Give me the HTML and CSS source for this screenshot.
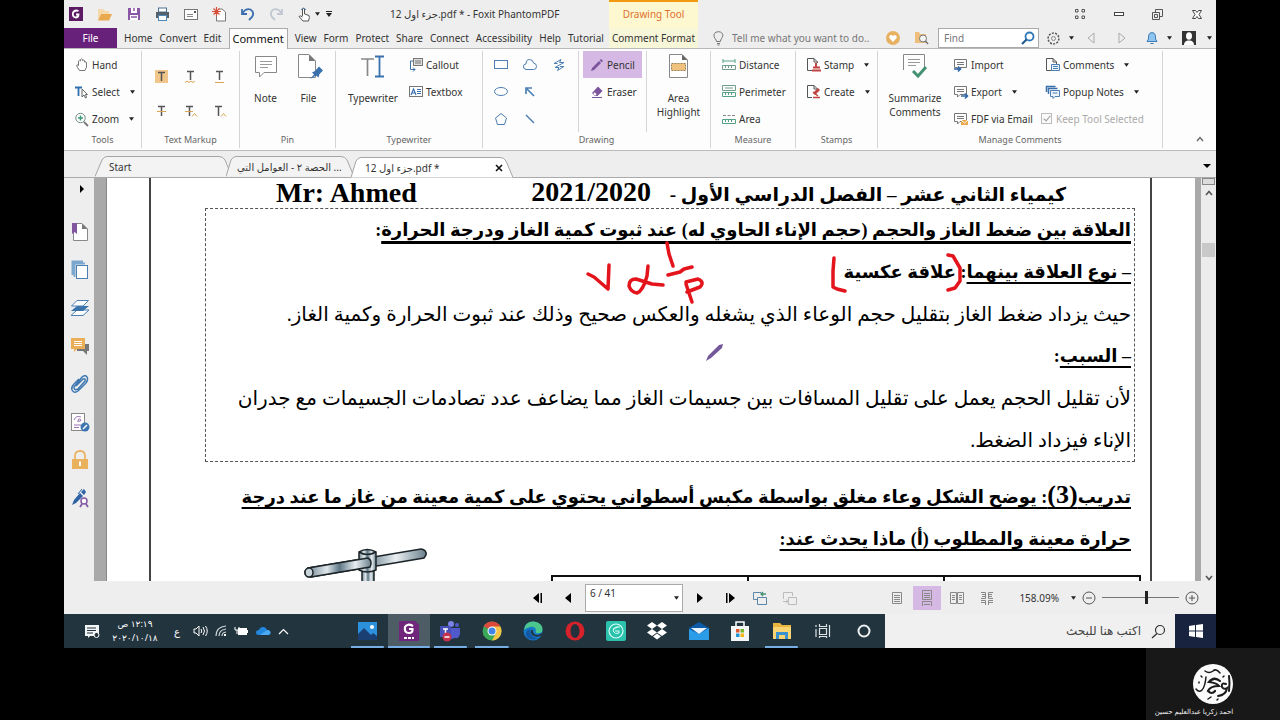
FILE: index.html
```html
<!DOCTYPE html>
<html lang="en">
<head>
<meta charset="utf-8">
<title>جزء اول 12.pdf * - Foxit PhantomPDF</title>
<link rel="stylesheet" href="styles.css">
</head>
<body>
<svg class="defs" aria-hidden="true">
  <symbol id="down" viewBox="0 0 6 4"><path d="M0 0H6L3 4Z" fill="#222"/></symbol>
  <symbol id="balloon" viewBox="0 0 16 16"><path d="M1.500 2.500H13.500V10.500H7L4.500 13V10.500H1.500ZM4 5.500H11M4 7.500H11" fill="none" stroke="#777"/></symbol>
  <symbol id="sheet" viewBox="0 0 16 16"><path d="M1.500 1.500H8L11.500 5V13.500H1.500ZM8 1.500V5H11.500" fill="none" stroke="#555"/></symbol>
</svg>
<div class="app">
  <header class="head">
    <div class="quick">
      <div class="quick-icons">
        <svg width="15" height="15" viewBox="0 0 15 15"><rect x="1" y="0" width="14" height="14" fill="#5d1b66"/><path d="M10.500 4Q7 2.500 5 5.500Q4 9.500 7.500 10.500Q10.500 10.500 10.500 7.500H8" fill="none" stroke="#fff" stroke-width="1.800"/></svg>
        <svg width="16" height="15" viewBox="0 0 16 15"><path d="M1 2H6L8 4H12V7H4L1 13Z" fill="#f6d9ab"/><path d="M4 7H15L12 13.500H1Z" fill="#e9a94e"/></svg>
        <svg width="14" height="14" viewBox="0 0 14 14"><path d="M1 1H13V13H1Z" fill="#8a56a6"/><rect x="4" y="1" width="6" height="5" fill="#fff"/><rect x="3" y="8" width="8" height="5" fill="#fff"/><path d="M7 1V4M4 10H10" stroke="#8a56a6" stroke-width="1.500"/></svg>
        <svg width="15" height="15" viewBox="0 0 15 15"><rect x="3.500" y="1" width="8" height="4" fill="#fff" stroke="#4c6f91"/><rect x="1" y="5" width="13" height="6" fill="#55606b"/><rect x="3.500" y="8.500" width="8" height="5" fill="#fff" stroke="#4c88bb"/></svg>
        <svg width="15" height="13" viewBox="0 0 15 13"><rect x=".5" y="1.500" width="13" height="10" fill="#fff" stroke="#777"/><path d="M3 6.500H9M3 8.500H9" stroke="#888"/><rect x="10" y="3" width="2" height="2" fill="#555"/></svg>
        <svg width="15" height="15" viewBox="0 0 15 15"><path d="M4.500 4V14H13.500V5L10 2H7" fill="#fff" stroke="#777"/><path d="M4.500 0V9M0 4.500H9M1.500 1.500L7.500 7.500M7.500 1.500L1.500 7.500" stroke="#d5513b" stroke-width="1.200"/></svg>
        <svg width="14" height="14" viewBox="0 0 14 14"><path d="M1 2V7H6M1.500 6Q5 1 9.500 2.500Q14 5.500 11 10L8 13" fill="none" stroke="#3a6fae" stroke-width="1.800"/></svg>
        <svg width="14" height="14" viewBox="0 0 14 14"><path d="M13 2V7H8M12.500 6Q9 1 4.500 2.500Q0 5.500 3 10L6 13" fill="none" stroke="#c1c8d2" stroke-width="1.800"/></svg>
        <svg width="14" height="15" viewBox="0 0 14 15"><path d="M5.500 9V2Q6.500 0 7.500 2V7L12 8.500Q13 10 11.500 14H6L2 9.500Q3 8 5.500 10" fill="#fff" stroke="#555"/><path d="M4 3Q6.500 -1 9 3" fill="none" stroke="#5b8ec0"/></svg>
      </div>
      <div class="quick-more">
        <svg width="5" height="4"><use href="#down"/></svg>
        <svg width="6" height="6" viewBox="0 0 6 6"><path d="M0 .5H6" stroke="#222"/><path d="M0 2H6L3 6Z" fill="#222"/></svg>
      </div>
      <h1 class="win-title"><bdi dir="ltr">12 <bdi>جزء اول</bdi>.pdf * - Foxit PhantomPDF</bdi></h1>
    </div>
    <div class="context">Drawing Tool</div>
    <div class="win-buttons">
      <button aria-label="Layout"><svg width="12" height="12" viewBox="0 0 12 12"><path d="M1.500 1.500H4V4H1.500ZM8 1.500H10.500V4H8ZM1.500 8H4V10.500H1.500ZM8 8H10.500V10.500H8Z" fill="none" stroke="#555"/></svg></button>
      <button aria-label="Minimize"><svg width="10" height="6" viewBox="0 0 10 6"><rect x=".5" y="1.500" width="9" height="3" fill="#fff" stroke="#444"/></svg></button>
      <button aria-label="Restore"><svg width="11" height="11" viewBox="0 0 11 11"><path d="M3.500 3V.5H10.500V7.500H8M.5 3.500H7.500V10.500H.5ZM2.500 5.500H5.500V8.500H2.500Z" fill="none" stroke="#555"/></svg></button>
      <button aria-label="Close"><svg width="10" height="9" viewBox="0 0 10 9"><path d="M.5 .5H3.500L5 2.500L6.500 .5H9.500L7 4.500L9.500 8.500H6.500L5 6.500L3.500 8.500H.5L3 4.500Z" fill="#fff" stroke="#444"/></svg></button>
    </div>
    <nav class="menu">
      <button class="file">File</button><button>Home</button><button>Convert</button><button>Edit</button><button class="on">Comment</button><button>View</button><button>Form</button><button>Protect</button><button>Share</button><button>Connect</button><button>Accessibility</button><button>Help</button><button>Tutorial</button>
    </nav>
    <button class="context-tab">Comment Format</button>
    <div class="helpers">
      <label class="tell"><svg width="11" height="15" viewBox="0 0 11 15"><path d="M3.500 10.500Q3.500 9 2 7.500Q-.5 3 3 1.200Q8 -.5 9.800 3.500Q10 6 8.500 7.500Q7.500 9 7.500 10.500ZM4 12.500H7M4.500 14H6.500" fill="none" stroke="#777"/></svg><input type="text" aria-label="Tell me" placeholder="Tell me what you want to do.."></label>
      <div class="fav">
        <svg width="14" height="14" viewBox="0 0 14 14"><circle cx="7" cy="7" r="7" fill="#e8b162"/><path d="M7 11L3.300 7Q3 4 5.200 4Q6.500 4 7 5.200Q7.500 4 9 4Q11 4.500 10.700 7Z" fill="#fff"/></svg>
        <svg width="15" height="14" viewBox="0 0 15 14"><path d="M1 1H5L6 3H12V12H1Z" fill="#eebf7c"/><circle cx="9" cy="7.500" r="3.500" fill="#f5f5f5" stroke="#777"/><path d="M11.500 10L14 13" stroke="#777" stroke-width="1.500"/></svg>
      </div>
      <label class="find"><input type="search" aria-label="Find" placeholder="Find"><svg width="14" height="14" viewBox="0 0 14 14"><circle cx="8.500" cy="5.500" r="4" fill="#fff" stroke="#2f78ba" stroke-width="1.800"/><path d="M5.500 8.500L1 13" stroke="#24598f" stroke-width="2.200"/></svg></label>
      <div class="tray">
        <svg width="13" height="13" viewBox="0 0 13 13"><circle cx="6.500" cy="6.500" r="5.400" fill="none" stroke="#555" stroke-width="1.500" stroke-dasharray="2 1.300"/><circle cx="6.500" cy="6.500" r="2" fill="none" stroke="#888"/></svg>
        <svg width="5" height="4"><use href="#down"/></svg>
        <svg width="8" height="12" viewBox="0 0 8 12"><path d="M7 1V11L1 6Z" fill="none" stroke="#aaa"/></svg>
        <svg width="8" height="12" viewBox="0 0 8 12"><path d="M1 1V11L7 6Z" fill="none" stroke="#aaa"/></svg>
        <svg width="12" height="14" viewBox="0 0 12 14"><path d="M1 10.500L2.500 8V5Q3 1.500 6 1.500Q9 1.500 9.500 5V8L11 10.500Z" fill="#8fc5f1" stroke="#3f7fb8"/><path d="M4.500 12.500H7.500" stroke="#3f7fb8"/></svg>
        <svg width="5" height="4"><use href="#down"/></svg>
        <svg width="14" height="14" viewBox="0 0 14 14"><rect width="14" height="14" fill="#333"/><ellipse cx="7" cy="5" rx="3" ry="3.800" fill="#fff"/><path d="M2 14Q2 10 6 9.500H8Q12 10 12 14Z" fill="#fff"/></svg>
        <svg width="5" height="4"><use href="#down"/></svg>
      </div>
    </div>
  </header>

  <section class="ribbon" aria-label="Comment tools">
    <div class="group">
      <div class="body">
        <div class="stack">
          <button><svg width="16" height="16" viewBox="0 0 16 16"><path d="M5 13L2.500 8.500Q2.500 7 4.500 8.500V4Q5.500 2.500 6.500 4V2.500Q7.500 1 8.500 2.500V3.500Q10 2 10.500 4V5Q12.500 4 12.500 6V10L11 13.500H6Z" fill="#fff" stroke="#777"/></svg>Hand</button>
          <button><svg width="16" height="16" viewBox="0 0 16 16"><path d="M1 3.500H8M4.500 3.500V12" stroke="#2f6faf" stroke-width="1.800"/><path d="M8 5V13L10 11L11.500 14L12.500 13.500L11.500 10.500H13.500Z" fill="#fff" stroke="#666"/></svg>Select<svg class="dd" width="5" height="4"><use href="#down"/></svg></button>
          <button><svg width="16" height="16" viewBox="0 0 16 16"><circle cx="6.500" cy="7" r="4.700" fill="#fff" stroke="#6f8a84"/><path d="M4 7H9M6.500 4.500V9.500" stroke="#3e9a77" stroke-width="1.500"/><path d="M10 11L14 15" stroke="#777" stroke-width="1.800"/></svg>Zoom<svg class="dd" width="5" height="4"><use href="#down"/></svg></button>
        </div>
      </div>
      <h2>Tools</h2>
    </div>
    <div class="group">
      <div class="body center">
        <div class="marks">
          <button aria-label="Highlight"><svg width="15" height="15" viewBox="0 0 15 15"><rect x="1" y="1" width="13" height="13" fill="#f0c68a"/><path d="M4 3.500H11M7.500 3V12" stroke="#555" stroke-width="1.500"/></svg></button>
          <button aria-label="Squiggly"><svg width="15" height="15" viewBox="0 0 15 15"><path d="M4 2.500H11M7.500 2V11" stroke="#555" stroke-width="1.500"/><path d="M2 13.500L4 12L6 13.500L8 12L10 13.500L12 12" fill="none" stroke="#dba552"/></svg></button>
          <button aria-label="Underline"><svg width="15" height="15" viewBox="0 0 15 15"><path d="M4 2.500H11M7.500 2V11" stroke="#555" stroke-width="1.500"/><path d="M3 13.500H12" stroke="#dba552"/></svg></button>
          <button aria-label="Strikeout"><svg width="15" height="15" viewBox="0 0 15 15"><path d="M4 3.500H11M7.500 3V13" stroke="#555" stroke-width="1.500"/><path d="M3 8.500H12" stroke="#dba552"/></svg></button>
          <button aria-label="Replace"><svg width="15" height="15" viewBox="0 0 15 15"><path d="M3 3.500H10M6.500 3V13" stroke="#555" stroke-width="1.500"/><path d="M2 8.500H10M9 13.500L11.500 10.500L14 13.500" fill="none" stroke="#dba552"/></svg></button>
          <button aria-label="Insert"><svg width="15" height="15" viewBox="0 0 15 15"><path d="M3 3.500H10M6.500 3V13" stroke="#555" stroke-width="1.500"/><path d="M9 13.500L11.500 10.500L14 13.500" fill="none" stroke="#dba552"/></svg></button>
        </div>
      </div>
      <h2>Text Markup</h2>
    </div>
    <div class="group">
      <div class="body center wide-gap">
        <button class="big"><svg width="26" height="28" viewBox="0 0 26 28"><path d="M2.500 4.500H23.500V20.500H11L6.500 25V20.500H2.500Z" fill="#fff" stroke="#888"/><path d="M7 9.500H19M7 12.500H19M7 15.500H15" stroke="#999"/></svg>Note</button>
        <button class="big"><svg width="28" height="28" viewBox="0 0 28 28"><path d="M3.500 2.500H14L20.500 9V25.500H3.500Z" fill="#fff" stroke="#888"/><path d="M14 2.500V9H20.500Z" fill="#777"/><path d="M15 27L19 22.500L17 20.500L20 19L24 14.500L28 18.500L24.500 22L23.500 25.500L21 23.500Z" fill="#3a70ac"/></svg>File</button>
      </div>
      <h2>Pin</h2>
    </div>
    <div class="group">
      <div class="body">
        <button class="big typewriter"><svg width="26" height="28" viewBox="0 0 26 28"><path d="M1 7H14M7.500 7V24" stroke="#888" stroke-width="1.700"/><path d="M15 4.500H24M15 24.500H24M19.500 4.500V24.500" stroke="#3a70ac" stroke-width="1.800"/></svg>Typewriter</button>
        <div class="stack">
          <button><svg width="16" height="16" viewBox="0 0 16 16"><rect x="5.500" y="1.500" width="9" height="7" fill="#ddd" stroke="#777"/><path d="M7 4H13M7 6H13" stroke="#777"/><path d="M5 4H2.500V12.500H7M5 10.500L7 12.500L5 14.500" fill="none" stroke="#3a70ac"/></svg>Callout</button>
          <button><svg width="16" height="16" viewBox="0 0 16 16"><rect x="1.500" y="2.500" width="13" height="10" fill="#fff" stroke="#777"/><path d="M3 11L5.500 5L8 11M4 9H7" fill="none" stroke="#3a70ac" stroke-width="1.200"/><path d="M9 5.500H13M9 7.500H13M9 9.500H13" stroke="#3a70ac"/></svg>Textbox</button>
        </div>
      </div>
      <h2>Typewriter</h2>
    </div>
    <div class="group">
      <div class="body">
        <div class="shapes">
          <button aria-label="Rectangle"><svg width="16" height="16" viewBox="0 0 16 16"><rect x="1.500" y="3.500" width="13" height="8"/></svg></button>
          <button aria-label="Cloud"><svg width="16" height="16" viewBox="0 0 16 16"><path d="M4 12.500Q1 12 1.500 9Q1.500 7 4 7Q4 2.500 7.500 2.500Q11 2.500 11.500 6Q14.500 6.500 14.500 9.500Q14.500 12.500 11.500 12.500Z"/></svg></button>
          <button aria-label="Polyline"><svg width="16" height="16" viewBox="0 0 16 16"><path d="M3 6.500L10 2.500L8.500 5.500H13L4 10.500H8L6.500 13.500L13 9.500H9M3 6.500H6.500"/></svg></button>
          <button aria-label="Oval"><svg width="16" height="16" viewBox="0 0 16 16"><ellipse cx="8" cy="7.500" rx="6.500" ry="4"/></svg></button>
          <button aria-label="Arrow"><svg width="16" height="16" viewBox="0 0 16 16"><path d="M12 12L4 4M4 10V4H10" stroke-width="1.700"/></svg></button><span></span>
          <button aria-label="Polygon"><svg width="16" height="16" viewBox="0 0 16 16"><path d="M8 2.500L13.500 7L11.500 13.500H4.500L2.500 7Z"/></svg></button>
          <button aria-label="Line"><svg width="16" height="16" viewBox="0 0 16 16"><path d="M4 4L12 12" stroke-width="1.500"/></svg></button>
        </div>
        <div class="stack pens">
          <button class="active"><svg width="16" height="16" viewBox="0 0 16 16"><path d="M2 14L3 11L10 4L12 6L5 13ZM10.700 3.300L12 2L14 4L12.700 5.300Z" fill="#7b549c"/></svg>Pencil</button>
          <button><svg width="16" height="16" viewBox="0 0 16 16"><path d="M3 9L9 2.500L13.500 7L8.500 12H6Z" fill="#7b549c"/><path d="M5 9L7 11" stroke="#fff" stroke-width="2"/><path d="M3 13.500H13" stroke="#7b549c"/></svg>Eraser</button>
        </div>
        <button class="big area"><svg width="22" height="28" viewBox="0 0 22 28"><path d="M1.500 2.500H14L19.500 8V25.500H1.500Z" fill="#fff" stroke="#888"/><path d="M14 2.500V8H19.500Z" fill="#666"/><rect x="3.500" y="11.500" width="14" height="7" fill="#f0c27e" stroke="#9b7e50" stroke-dasharray="2 1"/></svg>Area<br>Highlight</button>
      </div>
      <h2>Drawing</h2>
    </div>
    <div class="group">
      <div class="body">
        <div class="stack">
          <button><svg width="16" height="16" viewBox="0 0 16 16"><path d="M2 2V6M14 2V6M2 4H14" stroke="#55a184"/><path d="M1.500 8.500H14.500V12.500H1.500ZM4.500 9V11M7.500 9V11M10.500 9V11" fill="none" stroke="#6f9c8c"/></svg>Distance</button>
          <button><svg width="16" height="16" viewBox="0 0 16 16"><path d="M1.500 1.500H14.500V6.500H1.500ZM4 4H12" fill="none" stroke="#6f9c8c"/><path d="M1.500 8.500H14.500V12.500H1.500ZM4.500 9V11M7.500 9V11M10.500 9V11" fill="none" stroke="#55a184"/></svg>Perimeter</button>
          <button><svg width="16" height="16" viewBox="0 0 16 16"><path d="M2 4.500H14" stroke="#888" stroke-dasharray="3 1.500"/><path d="M1.500 8.500H14.500V12.500H1.500ZM4.500 9V11M7.500 9V11M10.500 9V11" fill="none" stroke="#55a184"/></svg>Area</button>
        </div>
      </div>
      <h2>Measure</h2>
    </div>
    <div class="group">
      <div class="body">
        <div class="stack">
          <button><svg width="16" height="16" viewBox="0 0 16 16"><use href="#sheet" width="16" height="16"/><rect x="6" y="6" width="8" height="9" fill="#fff"/><path d="M10 6V10M7 10.500H14M6 13.500H15" stroke="#bf4340" stroke-width="2"/></svg>Stamp<svg class="dd" width="5" height="4"><use href="#down"/></svg></button>
          <button><svg width="16" height="16" viewBox="0 0 16 16"><use href="#sheet" width="16" height="16"/><rect x="6" y="6" width="8" height="9" fill="#fff"/><path d="M8 10L13 5" stroke="#bf4340" stroke-width="3"/><path d="M7 8L12 12M7 13.500H14" stroke="#bf4340" stroke-width="1.500"/></svg>Create<svg class="dd" width="5" height="4"><use href="#down"/></svg></button>
        </div>
      </div>
      <h2>Stamps</h2>
    </div>
    <div class="group">
      <div class="body">
        <button class="big summary"><svg width="28" height="28" viewBox="0 0 28 28"><path d="M2.500 18V2.500H23.500V15" fill="none" stroke="#888"/><path d="M7 7.500H19M7 10.500H19M7 13.500H15" stroke="#999"/><path d="M12 19L17 24L25 15" fill="none" stroke="#459273" stroke-width="3"/></svg>Summarize<br>Comments</button>
        <div class="stack manage">
          <button><svg width="16" height="16" viewBox="0 0 16 16"><use href="#balloon" width="16" height="16"/><path d="M1 12H7M5 9.500L7.500 12L5 14.500" fill="none" stroke="#2f67a8" stroke-width="1.600"/></svg>Import</button>
          <button><svg width="16" height="16" viewBox="0 0 16 16"><use href="#balloon" width="16" height="16"/><path d="M8 12H14M12 9.500L14.500 12L12 14.500" fill="none" stroke="#2f67a8" stroke-width="1.600"/></svg>Export<svg class="dd" width="5" height="4"><use href="#down"/></svg></button>
          <button><svg width="16" height="16" viewBox="0 0 16 16"><use href="#balloon" width="16" height="16"/><rect x="8" y="9" width="7" height="5" fill="#e8a94c"/><path d="M8 9L11.500 12L15 9" fill="none" stroke="#fff"/></svg>FDF via Email</button>
        </div>
        <div class="stack">
          <button><svg width="16" height="16" viewBox="0 0 16 16"><use href="#sheet" width="16" height="16"/><path d="M6.500 7.500H14.500V13.500H6.500ZM8 9.500H13M8 11.500H13" fill="#eaf2fa" stroke="#4c7fb4"/></svg>Comments<svg class="dd" width="5" height="4"><use href="#down"/></svg></button>
          <button><svg width="16" height="16" viewBox="0 0 16 16"><path d="M1.500 8V2.500H10.500M3.500 10V4.500H12.500" fill="none" stroke="#3a70ac" stroke-width="1.500"/><path d="M5.500 6.500H14.500V12.500H10L8 14.500V12.500H5.500ZM7.500 9H12.500" fill="#eef4fb" stroke="#4c7fb4"/></svg>Popup Notes<svg class="dd" width="5" height="4"><use href="#down"/></svg></button>
          <label class="keep"><input type="checkbox" checked disabled>Keep Tool Selected</label>
        </div>
      </div>
      <h2>Manage Comments</h2>
    </div>
    <button class="collapse" aria-label="Collapse ribbon"><svg width="8" height="6" viewBox="0 0 8 6"><path d="M1 5L4 1.500L7 5" fill="none" stroke="#666" stroke-width="1.400"/></svg></button>
  </section>

  <nav class="tabs">
    <button class="tab start"><svg viewBox="0 0 137 21" preserveAspectRatio="none"><path d="M0 20.500L7 4Q9 .5 12 .5H124Q128 .5 130 4L137 20.500"/></svg><span>Start</span></button>
    <button class="tab second"><svg viewBox="0 0 128 21" preserveAspectRatio="none"><path d="M0 20.500L5 4Q7 .5 10 .5H115Q119 .5 121 4L128 20.500"/></svg><span dir="rtl">... الحصة ٢ - العوامل التي</span></button>
    <button class="tab current"><svg viewBox="0 0 162 21" preserveAspectRatio="none"><path d="M0 20.500L5 4Q7 .5 10 .5H149Q153 .5 155 4L162 20.500"/></svg><span>12 <bdi>جزء اول</bdi>.pdf *</span><svg class="x" width="8" height="8" viewBox="0 0 8 8"><path d="M1 1L7 7M7 1L1 7" stroke="#111" stroke-width="1.600"/></svg></button>
    <svg class="tabs-more" width="8" height="4" viewBox="0 0 8 4"><path d="M0 0H8L4 4Z"/></svg>
  </nav>

  <main class="work">
    <aside class="side">
      <button aria-label="Expand"><svg width="6" height="10" viewBox="0 0 6 10"><path d="M1 1L5 5L1 9Z"/></svg></button>
      <button aria-label="Bookmarks"><svg width="20" height="20" viewBox="0 0 20 20"><path d="M3.500 1.500H12L17.500 7V18.500H3.500Z" fill="#fff" stroke="#888"/><path d="M12 1.500V7H17.500Z" fill="#777"/><path d="M2 1H7V12L4.500 10L2 12Z" fill="#81559f"/></svg></button>
      <button aria-label="Pages"><svg width="20" height="20" viewBox="0 0 20 20"><path d="M2.500 15V1.500H13M4.500 17V3.500H15" fill="none" stroke="#7ba7cf" stroke-width="2"/><rect x="6.500" y="5.500" width="11" height="13" fill="#fff" stroke="#4c7fb4"/></svg></button>
      <button aria-label="Layers"><svg width="20" height="20" viewBox="0 0 20 20"><path d="M1 17.500L7 12H19L13 17.500Z" fill="#fff" stroke="#4c7fb4"/><path d="M1 13L7 8H19L13 13Z" fill="#3a73aa"/><path d="M1.500 8L7 2.500H18.500L13 8Z" fill="#fff" stroke="#4c7fb4"/></svg></button>
      <button aria-label="Comments"><svg width="20" height="20" viewBox="0 0 20 20"><path d="M7 8H19V15H17V19L13 15H7Z" fill="#777"/><path d="M1 2H15V13H7L4 16V13H1Z" fill="#ebae58"/><path d="M4 5.500H12M4 7.500H12M4 9.500H12" stroke="#fff"/></svg></button>
      <button aria-label="Attachments"><svg width="20" height="20" viewBox="0 0 20 20"><path d="M6 12L13 5Q16 4 15 7L8 15Q4 17 4 13L12 3Q16 0 17.500 4Q18 7 16 9L8 17Q4 20 2 16Q1 13 4 10L9 5" fill="none" stroke="#3f78b0" stroke-width="1.500"/></svg></button>
      <button aria-label="Signatures"><svg width="20" height="20" viewBox="0 0 20 20"><rect x="1.500" y="1.500" width="13" height="17" fill="#fff" stroke="#888"/><path d="M4 8Q6 3 11 5M8 10Q8 5 11 8Q11 10 8 9M4 13H11M4 15.500H9" fill="none" stroke="#9a75b4"/><circle cx="15" cy="15" r="4.500" fill="#3c76b1"/><path d="M13 17L17 13" stroke="#fff" stroke-width="1.400"/></svg></button>
      <button aria-label="Security"><svg width="20" height="20" viewBox="0 0 20 20"><path d="M5 10V6Q5 1 10 1Q15 1 15 6V10" fill="none" stroke="#e8b468" stroke-width="1.800"/><rect x="2" y="9" width="16" height="10" fill="#ebb25e"/><path d="M10 11.500V16" stroke="#fff" stroke-width="2"/></svg></button>
      <button aria-label="Digital signatures"><svg width="20" height="20" viewBox="0 0 20 20"><path d="M2 17L4 12L10 5L13 8L6 15ZM11 4L14 1L16 4L14 7Z" fill="#2d62a5"/><path d="M8 6L12 1" stroke="#2d62a5"/><circle cx="14" cy="13" r="3" fill="#fff" stroke="#845aa2" stroke-width="1.500"/><path d="M12 16L10 19M16 16L18 19" stroke="#845aa2" stroke-width="1.800"/></svg></button>
    </aside>
    <div class="splitter"></div>
    <article class="page" lang="ar" dir="rtl">
      <div class="frame">
        <header class="doc-head"><span>كيمياء الثاني عشر – الفصل الدراسي الأول - <b class="latin">&nbsp;&nbsp;2021/2020</b></span><b class="latin" dir="ltr">Mr: Ahmed</b></header>
        <section class="box">
          <p class="strong"><u class="thick">العلاقة بين ضغط الغاز والحجم (حجم الإناء الحاوي له) عند ثبوت كمية الغاز ودرجة الحرارة</u>:</p>
          <p class="strong"><u>– نوع العلاقة بينهما</u>: علاقة عكسية</p>
          <p>حيث يزداد ضغط الغاز بتقليل حجم الوعاء الذي يشغله والعكس صحيح وذلك عند ثبوت الحرارة وكمية الغاز.</p>
          <p class="strong"><u>– السبب</u>:</p>
          <p>لأن تقليل الحجم يعمل على تقليل المسافات بين جسيمات الغاز مما يضاعف عدد تصادمات الجسيمات مع جدران</p>
          <p>الإناء فيزداد الضغط.</p>
        </section>
        <section class="task">
          <p><u>تدريب<span class="number">(3)</span>: يوضح الشكل وعاء مغلق بواسطة مكبس أسطواني يحتوي على كمية معينة من غاز ما عند درجة</u></p>
          <p><u>حرارة معينة والمطلوب (أ) ماذا يحدث عند:</u></p>
        </section>
        <table class="grid"><tr><td></td><td></td><td></td></tr></table>
      </div>
      <svg class="ink" viewBox="107 177 1088 404" aria-hidden="true">
        <defs><linearGradient id="rod" x1="0" x2="1"><stop offset="0" stop-color="#748994"/><stop offset=".3" stop-color="#dfe7eb"/><stop offset=".5" stop-color="#5f7785"/><stop offset=".75" stop-color="#e9eff2"/><stop offset="1" stop-color="#6b818d"/></linearGradient></defs>
        <g fill="url(#rod)" stroke="#1d2529" stroke-width="1.500"><rect x="362" y="566" width="12" height="20"/><path d="M308 567L421 548Q427 549 426 554L424 557L311 576Q304 576 305 570Z"/><path d="M359 551V569Q367 573 376 569V551Q367 546 359 551ZM359 551Q367 556 376 551"/><path d="M308 567L368 557Q373 560 370 566L311 576Z"/><ellipse cx="309" cy="571.500" rx="4" ry="4.500" fill="#c9d5da"/></g>
        <g fill="none" stroke="#e3141b" stroke-width="3.500" stroke-linecap="round" stroke-linejoin="round">
          <path d="M588 273L594 276L608 288L609 264"/>
          <path d="M648 265L647 275Q643 290 637 292Q631 291 629 285Q629 278 636 278L652 283L663 284"/>
          <path d="M667 242L669 253L673 265M668 274L680 271L684 268L692 266"/>
          <path d="M686 283L689 292L692 301M686 281L698 278Q705 281 700 286L687 291"/>
          <path d="M834 257L833 270V286L837 288L845 290"/>
          <path d="M948 254L953 255L960 267V280L955 287L948 289"/>
        </g>
        <path d="M706 360L708 355L719 344L723 343L722 347L711 357Z" fill="#75589a"/>
      </svg>
    </article>
    <div class="scroll"><i class="split"></i><svg width="8" height="6" viewBox="0 0 8 6"><path d="M1 5L4 1.500L7 5" fill="none" stroke="#555" stroke-width="1.600"/></svg><i class="thumb"></i><svg width="8" height="6" viewBox="0 0 8 6"><path d="M1 1L4 4.500L7 1" fill="none" stroke="#555" stroke-width="1.600"/></svg></div>
  </main>

  <footer class="status">
    <div class="pager">
      <button aria-label="First page"><svg width="10" height="10" viewBox="0 0 10 10"><path d="M6 0V10L0 5ZM7.500 0H9V10H7.500Z"/></svg></button>
      <button aria-label="Previous page"><svg width="6" height="10" viewBox="0 0 6 10"><path d="M6 0V10L0 5Z"/></svg></button>
      <div class="page-pick"><select aria-label="Page"><option>6 / 41</option></select><svg width="5" height="4"><use href="#down"/></svg></div>
      <button aria-label="Next page"><svg width="6" height="10" viewBox="0 0 6 10"><path d="M0 0V10L6 5Z"/></svg></button>
      <button aria-label="Last page"><svg width="10" height="10" viewBox="0 0 10 10"><path d="M4 0V10L10 5ZM1 0H2.500V10H1Z"/></svg></button>
      <button aria-label="Previous view"><svg width="14" height="14" viewBox="0 0 14 14"><path d="M4 8.500H.5V1.500H8M4.500 6.500H13.500V13.500H4.500Z" fill="none" stroke="#5c87a9"/><path d="M13 3H8M10 1L8 3L10 5" fill="none" stroke="#459273" stroke-width="1.300"/></svg></button>
      <button aria-label="Next view"><svg width="14" height="14" viewBox="0 0 14 14"><path d="M.5 8V1.500H9.500V5M5.500 6.500H13.500V13.500H5.500ZM0 10.500H5M3 8.500L5 10.500L3 12.500" fill="none" stroke="#bbb"/></svg></button>
    </div>
    <div class="views">
      <button aria-label="Single page"><svg width="12" height="14" viewBox="0 0 12 14"><path d="M1.500 1.500H10.500V12.500H1.500ZM3 4.500H9M3 6.500H9M3 8.500H9M3 10.500H9"/></svg></button>
      <button class="sel" aria-label="Continuous"><svg width="12" height="16" viewBox="0 0 12 16"><path d="M1.500 .5H10.500V9.500H1.500ZM3 3.500H9M3 5.500H9M3 7.500H9M1.500 16V11.500H10.500V16M3 14.500H9"/></svg></button>
      <button aria-label="Facing"><svg width="14" height="12" viewBox="0 0 14 12"><path d="M.5 .5H6.500V11.500H.5ZM7.500 .5H13.500V11.500H7.500ZM2 3.500H5M2 5.500H5M2 7.500H5M9 3.500H12M9 5.500H12M9 7.500H12"/></svg></button>
      <button aria-label="Continuous facing"><svg width="14" height="14" viewBox="0 0 14 14"><path d="M1 1.500H5.500V7.500H1M13 1.500H8.500V7.500H13M2 3.500H5M2 5.500H5M9 3.500H12M9 5.500H12M1 9.500H5.500V14M13 9.500H8.500V14M1 11.500H5M9 11.500H13"/></svg></button>
    </div>
    <div class="zoom">
      <span>158.09%</span><svg width="5" height="4"><use href="#down"/></svg>
      <button aria-label="Zoom out"><svg width="14" height="14" viewBox="0 0 14 14"><circle cx="7" cy="7" r="6" fill="none" stroke="#555"/><path d="M4 7H10" stroke="#555"/></svg></button>
      <input type="range" aria-label="Zoom" min="0" max="100" value="58">
      <button aria-label="Zoom in"><svg width="14" height="14" viewBox="0 0 14 14"><circle cx="7" cy="7" r="6" fill="none" stroke="#555"/><path d="M4 7H10M7 4V10" stroke="#555"/></svg></button>
    </div>
  </footer>

  <div class="taskbar">
    <div class="systray">
      <svg width="16" height="15" viewBox="0 0 16 15"><path d="M1 1H15V12H6L4 14V12H1Z" fill="#f2f5f6"/><path d="M3 4H12M3 6.500H12M3 9H9" stroke="#22313b"/><circle cx="12.500" cy="11" r="2.500" fill="#22313b" stroke="#fff"/></svg>
      <time dir="rtl">١٢:١٩ ص<br>٢٠٢٠/١٠/١٨</time>
      <span class="lang">ع</span>
      <svg width="15" height="14" viewBox="0 0 15 14"><path d="M1 5H3L6 2V12L3 9H1ZM8 5Q9.500 7 8 9M10 3Q13 7 10 11M12.500 2Q16 7 12.500 12" fill="none" stroke="#fff"/></svg>
      <svg width="12" height="12" viewBox="0 0 12 12"><path d="M1 11Q1 2 11 1M4 11Q4 5 11 4M7 11Q7 7.500 11 7" fill="none" stroke="#cdd4d8" stroke-width="1.200"/><path d="M9 9H11V11H9Z" fill="#fff"/></svg>
      <svg width="15" height="10" viewBox="0 0 15 10"><rect x="4.500" y="2.500" width="8" height="6" fill="#fff" stroke="#fff"/><path d="M13.500 4V7M1 1V4H5V1M3 4V8" stroke="#fff" fill="none"/></svg>
      <svg width="15" height="10" viewBox="0 0 15 10"><path d="M3 9Q0 9 0 6.500Q0 4 3 4Q4 1 7 1Q10 1 11 4Q14.500 4 14.500 7Q14 9 12 9Z" fill="#2187df"/><path d="M4 9L11 4Q14.500 4 14.500 7Q14 9 12 9Z" fill="#4ca9f3"/></svg>
      <svg width="11" height="7" viewBox="0 0 11 7"><path d="M1 6L5.500 1.500L10 6" fill="none" stroke="#fff" stroke-width="1.200"/></svg>
    </div>
    <div class="apps">
      <button class="run" aria-label="Photos"><svg width="20" height="20" viewBox="0 0 20 20"><rect y="1" width="19" height="18" fill="#2c90dc"/><path d="M0 19V13L6 7L13 14L15 12L19 15V19Z" fill="#193f73"/><circle cx="14" cy="6" r="2" fill="#fff"/></svg></button>
      <button class="run focus" aria-label="Foxit"><svg width="20" height="20" viewBox="0 0 20 20"><path d="M0 0H16L20 4V20H0Z" fill="#70267a"/><path d="M14 5Q8 2 6 6Q5 12 10 12Q14 12 13.500 8H10" fill="none" stroke="#fff" stroke-width="2.200"/><path d="M5 17H15" stroke="#fff" stroke-width="2" stroke-dasharray="3 1"/></svg></button>
      <button class="run" aria-label="Teams"><svg width="22" height="22" viewBox="0 0 22 22"><circle cx="12" cy="4" r="3" fill="#7b83eb"/><circle cx="18" cy="5" r="2" fill="#5059c9"/><path d="M7 8H21V14Q20 19 16 18L9 20Z" fill="#5059c9"/><rect x="1" y="6" width="11" height="11" fill="#4650b8"/><path d="M4 9H9M6.500 9V14" stroke="#fff" stroke-width="1.500"/><circle cx="8" cy="17" r="4.500" fill="#c4314b"/><path d="M5.500 17H10.500" stroke="#fff" stroke-width="1.500"/></svg></button>
      <button class="run" aria-label="Chrome"><svg width="20" height="20" viewBox="0 0 20 20"><circle cx="10" cy="10" r="9.500" fill="#3ba757"/><path d="M10 10L1.700 5.300A9.500 9.500 0 0 1 18.300 5.300Z" fill="#dc4a3e"/><path d="M10 5.500H18.400A9.500 9.500 0 0 1 10 19.500L14 12Z" fill="#f6c344"/><circle cx="10" cy="10" r="4.500" fill="#fff"/><circle cx="10" cy="10" r="3.500" fill="#4285e8"/></svg></button>
      <button aria-label="Edge"><svg width="20" height="20" viewBox="0 0 20 20"><circle cx="10" cy="10" r="9.500" fill="#1679c7"/><path d="M1 9Q2 0 11 .5Q20 2 19.500 9Q19 13 13 12Q12 11 13 9Q12 5 7 6Q3 7 1 9Z" fill="#4bc78d"/><path d="M7 8Q6 16 15 17Q9 21 4 16Q1 10 7 8Z" fill="#1556a3"/><path d="M9 9Q8 12 11 14Q15 16 19 13" fill="none" stroke="#22313b" stroke-width="1.800"/></svg></button>
      <button aria-label="Opera"><svg width="20" height="20" viewBox="0 0 20 20"><ellipse cx="10" cy="10" rx="9.500" ry="9.500" fill="#d5222b"/><ellipse cx="10" cy="10" rx="4.500" ry="7" fill="#22313b"/></svg></button>
      <button aria-label="Messages"><svg width="20" height="20" viewBox="0 0 20 20"><rect width="20" height="20" rx="2" fill="#2bc1ad"/><circle cx="10" cy="10" r="7" fill="none" stroke="#d6fff5" stroke-width="1.200"/><path d="M14 6Q8 5 7 10Q9 14 13 12V10H9M7 8L12 6" fill="none" stroke="#d6fff5"/></svg></button>
      <button aria-label="Dropbox"><svg width="20" height="18" viewBox="0 0 20 18"><path d="M5 0L10 3.500L5 7L0 3.500ZM15 0L20 3.500L15 7L10 3.500ZM5 7L10 10.500L5 14L0 10.500ZM15 7L20 10.500L15 14L10 10.500ZM10 11.500L14 14.500L10 17.500L6 14.500Z" fill="#fff"/></svg></button>
      <button aria-label="Mail"><svg width="20" height="18" viewBox="0 0 20 18"><path d="M0 6L10 0L20 6V18H0Z" fill="#0d5ba8"/><path d="M0 7L10 12L20 6V18H0Z" fill="#2b9ce8"/><path d="M2 6H18L10 12Z" fill="#e8f3fb"/></svg></button>
      <button aria-label="Store"><svg width="20" height="20" viewBox="0 0 20 20"><path d="M6 7V1H14V7" fill="none" stroke="#fff" stroke-width="1.500"/><rect x="1" y="5" width="18" height="15" fill="#f4f5f6"/><path d="M6 8H9.500V11.500H6Z" fill="#e3572e"/><path d="M10.500 8H14V11.500H10.500Z" fill="#78b82a"/><path d="M6 12.500H9.500V16H6Z" fill="#2396d6"/><path d="M10.500 12.500H14V16H10.500Z" fill="#f1b51c"/></svg></button>
      <button class="run" aria-label="Explorer"><svg width="20" height="18" viewBox="0 0 20 18"><path d="M1 1H8L10 3H19V17H1Z" fill="#e9b741"/><rect x="1" y="5" width="18" height="12" fill="#f9d571"/><path d="M4 17V10H16V17H13V13H7V17Z" fill="#3a91cf"/></svg></button>
      <button aria-label="Task view"><svg width="16" height="14" viewBox="0 0 16 14"><path d="M1 1V3M1 5V13M4.500 4.500H11.500V10.500H4.500ZM4.500 0V2.500H11.500V0M4.500 14V12.500H11.500V14M14.500 1V13" fill="none" stroke="#dde2e4" stroke-width="1.200"/></svg></button>
      <button aria-label="Cortana"><svg width="14" height="14" viewBox="0 0 14 14"><circle cx="7" cy="7" r="5.500" fill="none" stroke="#eef1f2" stroke-width="2"/></svg></button>
    </div>
    <label class="search" dir="rtl"><svg width="15" height="15" viewBox="0 0 15 15"><circle cx="9" cy="6" r="4.500" fill="none" stroke="#333" stroke-width="1.200"/><path d="M6 9.500L1 14" stroke="#333" stroke-width="1.300"/></svg><input type="text" aria-label="Search" placeholder="اكتب هنا للبحث"></label>
    <button class="win" aria-label="Start"><svg width="14" height="14" viewBox="0 0 14 14"><path d="M0 2L6 1V6.500H0ZM7 1L14 0V6.500H7ZM0 7.500H6V13L0 12ZM7 7.500H14V14L7 13Z" fill="#fff"/></svg></button>
  </div>
</div>
<div class="below">
  <figure class="badge">
    <svg width="42" height="42" viewBox="0 0 42 42"><circle cx="21" cy="21" r="20" fill="#fbfbfb"/><g fill="none" stroke="#1b1b1b" stroke-linecap="round"><path d="M37 13Q38 20 37 28M34 21Q29 19 30 24Q32 27 35 25Q34 32 26 33" stroke-width="2"/><path d="M28 18Q22 13 17 19Q25 20 27 23Q18 23 16 28Q20 32 23 28" stroke-width="2.200"/><path d="M14 14Q13 24 10 27Q7 30 4 26M13 8Q17 11 21 8Q24 5 28 10" stroke-width="1.500"/><path d="M9 13L10 14M32 13L31 14M25 37L26 36M16 36L19 34M7 19V20" stroke-width="1.500"/></g></svg>
    <figcaption dir="rtl">احمد زكريا عبدالعليم حسين</figcaption>
  </figure>
</div>
</body>
</html>
```
FILE: styles.css
```css
* { box-sizing: border-box; }
body { margin: 0; min-height: 100vh; display: flex; flex-direction: column; background: #000; color: #333; font: 10px/14px "Noto Sans", "DejaVu Sans", sans-serif; }
button, input, select { font: inherit; color: inherit; }
button { display: flex; align-items: center; justify-content: center; border: 0; padding: 0; background: none; white-space: nowrap; }
input { min-width: 0; border: 0; padding: 0; background: none; }
svg { flex: none; display: block; }
.defs { position: absolute; width: 0; height: 0; }
.app { height: 90vh; margin: 0 5%; display: flex; flex-direction: column; background: #eee; overflow: hidden; }

/* title bar and menu */
.head { display: grid; grid-template: 28px 20px / minmax(0, 545fr) 89px minmax(0, 518fr); border-bottom: 1px solid #b9b9b9; }
.quick { display: flex; align-items: center; padding-left: 4px; }
.quick-icons { display: flex; align-items: center; justify-content: space-between; width: 243px; }
.quick-more { display: flex; align-items: center; gap: 6px; padding-left: 4px; }
.win-title { flex: 1; margin: 0; font-size: 10px; font-weight: 400; padding-left: 58px; white-space: nowrap; }
.context { border-top: 2px solid #f39a13; background: #fdf8cf; color: #e2702f; text-align: center; line-height: 24px; }
.context-tab { background: #f7f6d9; line-height: 20px; }
.win-buttons { display: flex; justify-content: flex-end; }
.win-buttons button { width: 39px; }
.menu { display: flex; align-items: stretch; justify-content: space-between; padding-right: 5px; }
.menu .file { width: 53px; background: #68217a; color: #fff; }
.menu .on { position: relative; padding: 0 3px; height: 21px; background: #fdfdfd; border: 1px solid #aaa; border-bottom: 0; font-size: 11px; color: #111; }
.helpers { display: flex; align-items: center; padding-left: 15px; }
.tell { display: flex; align-items: center; gap: 8px; width: 173px; }
.tell input { flex: 1; }
.tell input::placeholder, .find input::placeholder { color: #777; opacity: 1; }
.fav { display: flex; gap: 14px; width: 52px; }
.find { display: flex; align-items: center; width: 101px; height: 20px; padding: 0 3px 0 5px; background: #fff; border: 1px solid #aaa; }
.find input { flex: 1; }
.tray { flex: 1; display: grid; grid-template-columns: 26fr 10fr 30fr 32fr 28fr 6fr 33fr 8fr; align-items: center; justify-items: center; padding: 0 3px 0 1px; }

/* ribbon */
.ribbon { display: grid; grid-template-columns: 78fr 98fr 96fr 147fr 228fr 85fr 82fr 285fr 53fr; padding: 2px 0; background: #fdfdfd; border-bottom: 1px solid #bbb; }
.group { min-width: 0; border-right: 1px solid #d5d5d5; }
.group h2 { margin: 0; font-size: 9px; font-weight: 400; line-height: 16px; color: #666; text-align: center; }
.body { display: flex; height: 81px; padding-left: 10px; }
.center { justify-content: center; padding: 0; }
.wide-gap { gap: 16px; }
.stack { display: grid; grid-template-rows: repeat(3, 27px); align-content: start; }
.stack button, .keep { justify-content: flex-start; gap: 2px; }
.dd { margin-left: 8px; }
.marks { display: grid; grid-template: 34px 34px / repeat(3, 29px); padding-top: 8px; }
.big { flex-direction: column; justify-content: flex-start; line-height: 14px; padding-top: 1px; }
.big svg { margin-bottom: 11px; }
.typewriter { width: 54px; margin-right: 8px; }
.shapes { display: grid; grid-template: repeat(3, 27px) / repeat(3, 29px); padding-right: 5px; margin-left: -7px; }
.shapes svg { fill: none; stroke: #4c7fb4; }
.pens { width: 69px; border: solid #d5d5d5; border-width: 0 1px; padding: 0 4px; }
.pens button { padding-left: 6px; }
.pens .active { background: #d5b8e3; }
.area { flex: 1; }
.summary { width: 54px; margin-right: 11px; }
.manage { width: 92px; }
.keep { display: flex; align-items: center; color: #aaa; white-space: nowrap; }
.keep input { appearance: none; width: 11px; height: 11px; margin: 0 2px 0 -4px; border: 1px solid #bbb; background: #fafafa; position: relative; }
.keep input::after { content: ""; position: absolute; left: 3px; top: 0; width: 3px; height: 6px; border: solid #999; border-width: 0 1px 1px 0; transform: rotate(40deg); }
.collapse { align-self: end; width: 8px; height: 18px; margin-left: 33px; }

/* document tabs */
.tabs { display: flex; align-items: flex-end; height: 27px; padding-left: 31px; border-bottom: 1px solid #aaa; }
.tab { position: relative; height: 21px; justify-content: flex-start; padding-left: 14px; }
.tab span { position: relative; }
.tab > svg:first-child { position: absolute; inset: 0; width: 100%; height: 100%; fill: #f3f3f3; stroke: #a5a5a5; }
.start { width: 137px; }
.second { width: 128px; margin-left: -6px; padding-left: 11px; }
.current { width: 162px; margin-left: -3px; margin-bottom: -1px; }
.current > svg:first-child { fill: #fff; }
.current .x { position: relative; margin-left: auto; margin-right: 10px; }
.tabs-more { margin: 0 5px 9px auto; }

/* document */
.work { flex: 1; min-height: 0; display: flex; overflow: hidden; }
.side { width: 30px; display: grid; grid-template-rows: 22px; grid-auto-rows: 38px; align-content: start; padding-left: 1px; }
.side button:first-child { padding-left: 4px; margin-bottom: 0; }
.side button:nth-child(2) { margin-top: 0; }
.side { grid-template-rows: 35px; }
.side button:first-child { align-items: flex-start; padding-top: 6px; }
.splitter { width: 13px; background: #a9a9a9; border-right: 1px solid #888; }
.page { position: relative; flex: 1; min-width: 0; background: #fff; padding: 0 43px 0 42px; color: #000; font-family: "Liberation Serif", "DejaVu Sans", serif; white-space: nowrap; overflow: hidden; }
.frame { height: 100%; border: solid #444; border-width: 0 2px; padding: 0 15px 0 54px; overflow: hidden; }
.latin { font-family: "Liberation Serif", serif; font-size: 28px; line-height: 28px; }
.doc-head { display: flex; justify-content: space-between; align-items: center; height: 30px; padding: 0 69px 0 71px; font-size: 19px; line-height: 28px; font-weight: 700; }
.box { border: 1px dashed #555; padding: 0 3px; }
.box p, .task p { margin: 0; height: 42px; line-height: 42px; font-size: 20px; }
.box .strong, .task p { font-size: 18px; font-weight: 700; }
u { text-underline-offset: 4px; text-decoration-thickness: 2px; text-decoration-skip-ink: none; }
.thick { text-underline-offset: 5px; text-decoration-thickness: 3px; }
.task { padding: 14px 4px 0; }
.number { font-size: 26px; line-height: 28px; }
.grid { width: 590px; height: 30px; margin: 15px -6px 0 auto; border-collapse: collapse; }
.grid td { border: 2px solid #111; }
.ink { position: absolute; left: 0; top: 0; width: 100%; }
.scroll { width: 21px; border-left: 6px solid #a9a9a9; background: #ececec; display: flex; flex-direction: column; align-items: center; }
.split { width: 13px; height: 7px; margin-bottom: 5px; border: 1px solid #888; background: #ddd; }
.thumb { width: 13px; height: 14px; margin: 47px 0 auto; background: #c9c9c9; }

/* status bar */
.status { display: grid; grid-template-columns: minmax(0, 820fr) 118px minmax(0, 198fr); align-items: center; height: 33px; padding-right: 17px; }
.pager { display: flex; align-items: center; padding-left: 57%; gap: 16px; }
.pager button { width: 14px; flex: none; }
.page-pick { position: relative; flex: none; margin: 0 -6px; }
.page-pick select { display: block; appearance: none; width: 98px; height: 28px; padding: 0 4px 9px; border: 1px solid #aaa; border-radius: 0; background: #fff; }
.page-pick svg { position: absolute; right: 4px; top: 12px; }
.views { display: flex; justify-content: center; gap: 2px; }
.views button { width: 28px; height: 24px; }
.views svg { fill: none; stroke: #888; }
.views .sel { background: #d5b8e3; }
.zoom { display: flex; align-items: center; justify-content: flex-end; gap: 6px; }
.zoom span { margin-right: 6px; }
.zoom input { appearance: none; width: 77px; height: 14px; margin: 0; background: linear-gradient(#777, #777) center / 100% 1px no-repeat; }
.zoom input::-webkit-slider-thumb { appearance: none; width: 3px; height: 13px; background: #222; }

/* taskbar */
.taskbar { display: grid; grid-template-columns: minmax(0, 283fr) minmax(0, 538fr) minmax(0, 290fr) minmax(0, 41fr); height: 34px; background: #22343e; }
.systray { display: flex; align-items: center; color: #fff; padding-left: 20px; gap: 7px; }
.systray time { width: 56px; margin-right: 4px; text-align: center; font-size: 9px; line-height: 14px; }
.lang { width: 12px; }
.apps { display: flex; }
.apps button { flex: 1; }
.apps .run { background: linear-gradient(#76aee5, #76aee5) bottom / 80% 2px no-repeat; }
.apps .focus { background: linear-gradient(#76aee5, #76aee5) bottom / 100% 2px no-repeat #4e5d65; }
.search { display: flex; align-items: center; gap: 10px; padding: 0 9px; background: #f0f0f0; }
.search input { flex: 1; font-size: 12px; }
.search input::placeholder { color: #444; opacity: 1; }
.win { background: #18243f; }

.below { flex: 1; display: flex; justify-content: flex-end; }
.badge { width: 134px; margin: 0; background: #181818; display: flex; flex-direction: column; align-items: center; padding-top: 15px; color: #eee; font-size: 7px; line-height: 14px; white-space: nowrap; }
.badge figcaption { padding-right: 38px; }
```
